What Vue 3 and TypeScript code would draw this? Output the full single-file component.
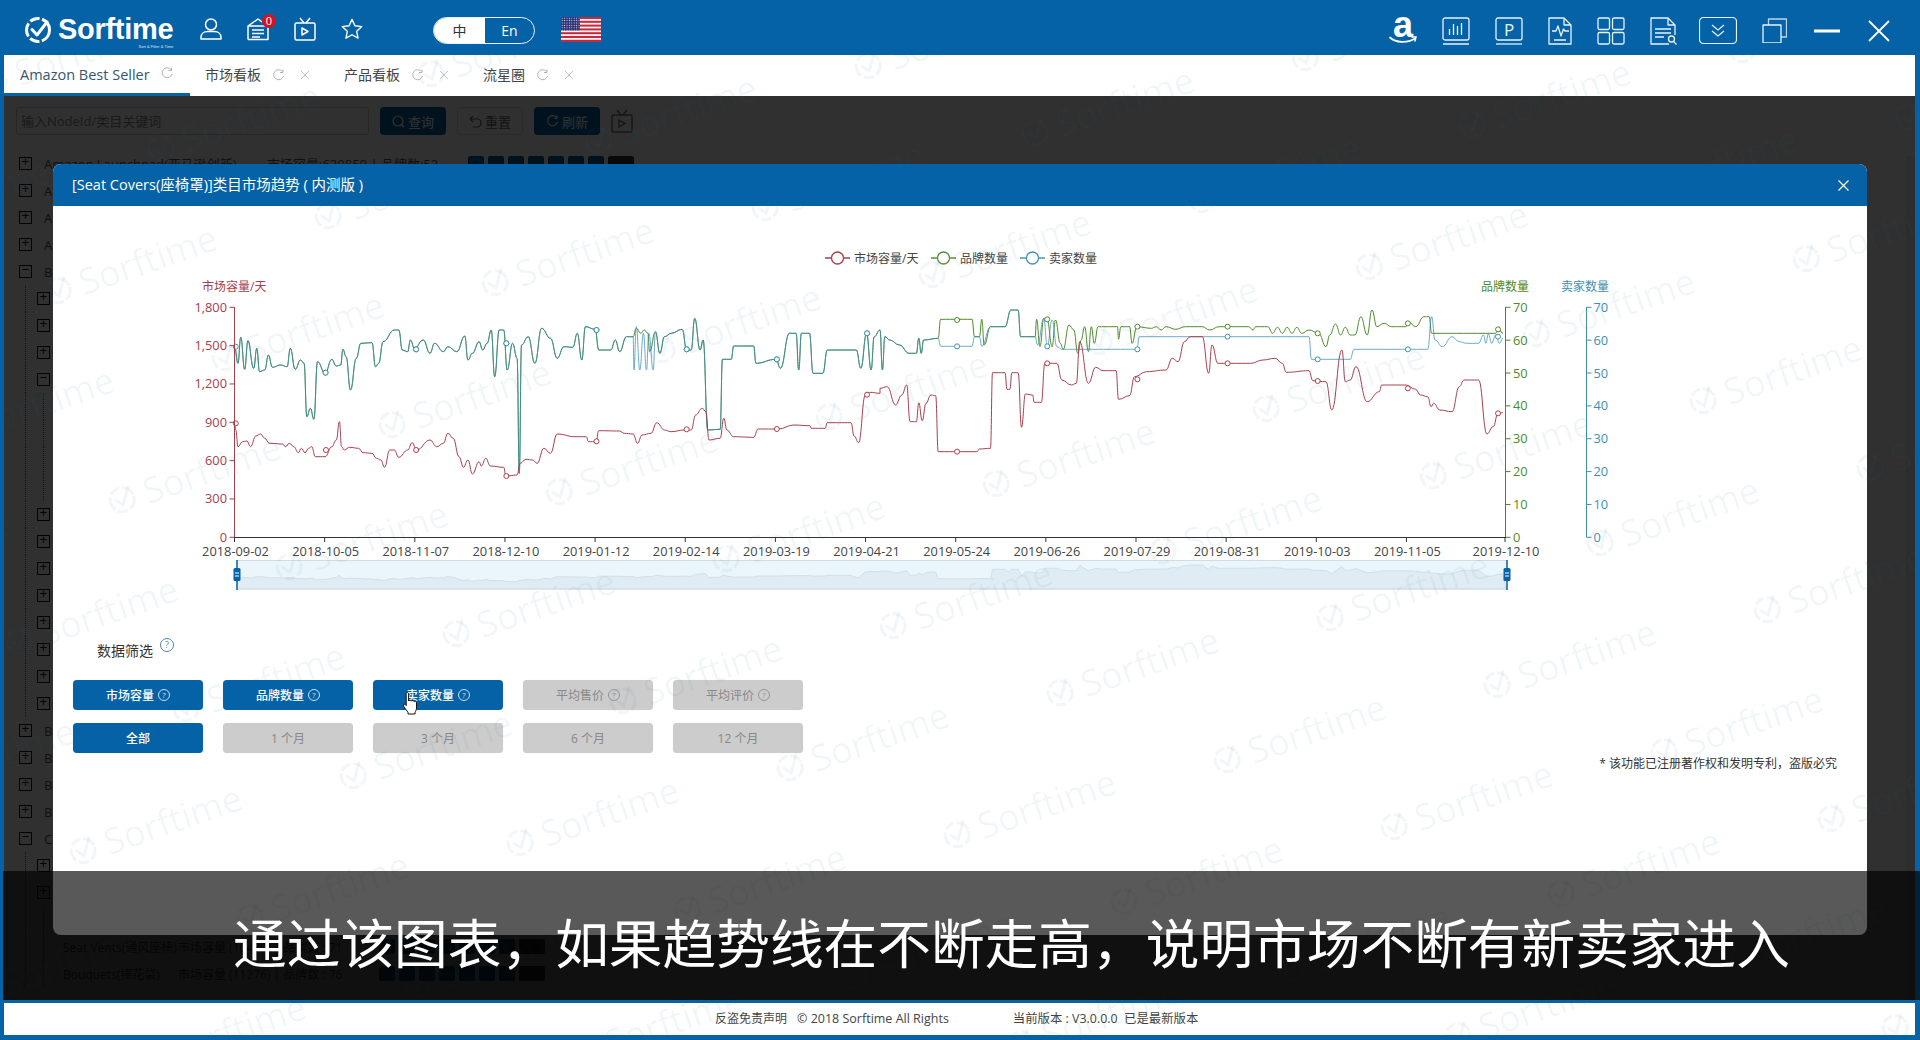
<script setup lang="ts">
type Pt = [number, number];
const pairs = (a: number[], ox: number, sx: number): Pt[] => {
  const out: Pt[] = [];
  for (let i = 0; i < a.length; i += 2) out.push([ox + a[i] / sx, 230 + a[i + 1] / 3]);
  return out;
};
const L = (a: number[]) => pairs(a, 180, 2.24);
const R = (a: number[]) => pairs(a, 880, 2.063);
const str = (p: Pt[]) => p.map((q) => q[0].toFixed(1) + ',' + q[1].toFixed(1)).join(' ');
const smooth = (p: Pt[]) => {
  let d = 'M' + p[0][0].toFixed(1) + ' ' + p[0][1].toFixed(1);
  for (let i = 1; i < p.length; i++) {
    const [x0, y0] = p[i - 1];
    const [x1, y1] = p[i];
    const h = (x1 - x0) * 0.45;
    d += 'C' + (x0 + h).toFixed(1) + ' ' + y0.toFixed(1) + ' ' + (x1 - h).toFixed(1) + ' ' + y1.toFixed(1) + ' ' + x1.toFixed(1) + ' ' + y1.toFixed(1);
  }
  return d;
};

const redPts = [
  ...L([122,580,125,600,130,650,140,635,150,633,158,650,170,618,180,612,190,625,200,640,230,642,236,650,245,640,255,650,265,668,272,655,280,668,288,655,295,650,303,680,325,680,340,650,350,630,357,575,362,650,368,660,380,652,400,655,410,668,430,670,440,685,450,690,458,712,470,660,480,660,490,682,510,660,520,638,530,660,560,630,575,650,590,640,600,610,612,625,625,680,635,712,645,690,655,732,670,695,675,708,685,685,695,708,725,712,730,738,755,735,762,700,775,688,790,690,800,700,815,655,830,670,845,612,885,620,910,620,915,635,932,635,938,602,985,603,995,610,1015,612,1025,640,1035,615,1055,610,1068,578,1085,600,1100,605,1130,600,1145,600,1155,555,1170,535,1178,545,1185,630,1210,625,1218,565,1225,600,1240,620,1285,622,1295,597,1340,597,1375,585,1410,587,1415,595,1445,595,1450,578,1503,578,1510,618,1520,638,1535,495,1545,487,1568,490]),
  ...R([0,475,15,470,32,525,45,495,55,465,62,575,75,575,80,518,87,572,95,520,105,495,115,497,120,665,200,665,205,657,228,655,232,428,258,428,262,478,268,478,272,428,285,428,292,592,300,492,315,495,318,517,333,517,340,400,365,400,375,450,395,465,405,460,412,335,430,460,445,412,460,422,487,422,492,508,515,497,525,440,550,425,590,420,603,385,615,395,628,335,640,320,665,320,678,430,685,345,697,400,765,400,790,390,815,385,830,400,838,427,885,422,893,452,920,455,932,540,953,360,960,455,970,450,982,410,1005,515,1030,485,1035,465,1085,465,1105,478,1115,495,1130,500,1137,530,1142,520,1155,540,1180,545,1195,470,1205,450,1235,450,1252,612,1265,590,1275,550,1285,548]),
];
const gtA = L([122,350,130,400,136,322,145,418,152,332,165,415,172,355,178,425,190,420,198,375,207,412,225,405,240,410,247,355,258,418,270,390,278,400,284,560,292,535,300,568,308,395,325,430,340,388,350,408,360,405,365,358,372,380,382,480,395,385,405,340,430,338,438,410,445,400,455,335,480,300,490,300,498,360,510,365,516,330,525,355,545,330,560,370,570,340,590,365,600,350,620,365,638,318,645,390,655,370,670,335,678,360,688,340,697,300,705,440,715,300,725,300,733,420,745,340,755,385,760,730,765,345,780,320,795,400,810,295,830,325,845,385,860,350,880,352,890,310,900,390,908,290,930,298,938,360,965,360,975,330,985,365,1000,320,1015,320]);
const gOsc = L([1022,295,1032,310,1040,300,1048,310,1052,365,1065,305]);
const tOsc = L([1017,420,1022,290,1030,420,1038,310,1045,420,1050,310,1060,420,1065,305]);
const gtB = [
  ...L([1075,370,1085,320,1100,310,1125,298,1135,360,1145,360,1153,265,1165,360,1172,330,1182,600,1210,598,1215,388,1235,388,1240,348,1285,348,1290,400,1335,388,1345,415,1365,310,1380,310,1386,420,1392,310,1410,310,1418,430,1440,430,1450,360,1515,360,1525,415,1538,310,1548,420,1555,320,1568,300]),
  ...R([0,300,5,420,10,320,20,330,40,345,60,370,75,370,80,325,85,370,90,330,120,325]),
];
const greenPts = [
  ...gtA, ...gOsc, ...gtB,
  ...R([125,268,190,268,195,320,205,320,210,268,215,345,228,290,258,290,270,240,285,240,290,320,320,320,323,268,330,350,338,265,345,270,355,350,362,270,372,340,378,358,390,285,400,300,408,370,415,330,422,290,430,365,436,290,442,340,450,290,457,290,490,290,492,328,497,290,515,290,520,340,530,290,560,295,570,290,580,300,590,290,610,298,630,290,665,290,680,300,700,290,760,290,770,300,775,290,800,290,810,310,820,292,830,310,840,292,850,310,860,292,870,310,885,300,905,310,920,350,928,315,940,282,950,315,960,292,970,315,980,315,992,260,1005,315,1015,240,1025,290,1040,280,1055,290,1085,290,1090,275,1105,290,1122,260,1133,260,1138,310,1270,310,1275,295,1285,310]),
];
const tealPts = [
  ...gtA, ...tOsc, ...gtB,
  ...R([125,349,190,349,195,320,205,320,210,349,228,290,258,290,270,240,285,240,290,320,320,320,325,345,338,265,345,350,355,270,365,350,375,358,530,358,535,320,885,320,890,388,970,388,978,358,1130,358,1138,260,1145,330,1160,350,1180,320,1195,335,1210,340,1235,340,1245,315,1250,340,1255,312,1262,340,1270,315,1278,340,1285,325]),
];

const series = [
  {
    key: 'g', color: '#4f8a2b', cls: 'line',
    d: smooth(greenPts),
    dots: [...L([326,428,529,358,731,340,933,300,1135,358,1337,388,1539,310]), ...R([159,270,345,268,531,290,717,290,903,310,1089,280,1275,298])],
  },
  {
    key: 't', color: '#3a8fb5', cls: 'line blend',
    d: smooth(tealPts),
    dots: [...L([125,350,326,428,529,358,731,340,933,300,1135,358,1337,388,1539,310]), ...R([159,349,345,349,531,358,717,320,903,388,1089,358,1275,320])],
  },
  {
    key: 'r', color: '#a8404c', cls: 'line',
    d: smooth(redPts),
    dots: [...L([125,580,327,660,529,660,731,738,933,634,1135,598,1337,597,1539,494]), ...R([159,665,345,400,531,448,717,400,903,453,1089,475,1275,550])],
  },
];

const miniLine = redPts.map((p): Pt => [p[0] < 237 ? 237 : p[0], 589 - (537 - p[1]) * 0.12]);
const miniArea = '237,589 ' + str(miniLine) + ' 1506,589';

const dates = ['2018-09-02','2018-10-05','2018-11-07','2018-12-10','2019-01-12','2019-02-14','2019-03-19','2019-04-21','2019-05-24','2019-06-26','2019-07-29','2019-08-31','2019-10-03','2019-11-05','2019-12-10'];
const xTicks = dates.map((d, i) => ({ d, x: i === 14 ? 1505 : 234.5 + i * 90.15 }));
const leftTicks = ['1,800','1,500','1,200','900','600','300','0'].map((t, i) => ({ t, y: 307.3 + i * 38.33 }));
const rightTicks = ['70','60','50','40','30','20','10','0'].map((t, i) => ({ t, y: 307.3 + i * 32.86 }));
const legend = [
  { n: '市场容量/天', c: '#a8404c', x: 825 },
  { n: '品牌数量', c: '#5d8f3a', x: 931 },
  { n: '卖家数量', c: '#4c93b3', x: 1020 },
];

const row1 = [
  { t: '市场容量', on: true }, { t: '品牌数量', on: true }, { t: '卖家数量', on: true },
  { t: '平均售价', on: false }, { t: '平均评价', on: false },
];
const row2 = [
  { t: '全部', on: true }, { t: '1 个月', on: false }, { t: '3 个月', on: false },
  { t: '6 个月', on: false }, { t: '12 个月', on: false },
];

interface TreeRow { lv: number; sym: string; name: string; stat: string }
const treeRows: TreeRow[] = [];
const add = (lv: number, sym: string, name = '', stat = '') => treeRows.push({ lv, sym, name, stat });
add(0, '+', 'Amazon Launchpad(亚马逊创新)', '市场容量:620850 | 品牌数:52');
add(0, '+', 'A');
add(0, '+', 'A');
add(0, '+', 'A');
add(0, '-', 'B');
for (let i = 0; i < 3; i++) add(1, '+');
add(1, '-');
for (let i = 0; i < 4; i++) add(2, '');
for (let i = 0; i < 8; i++) add(1, '+');
for (let i = 0; i < 4; i++) add(0, '+', 'B');
add(0, '-', 'C');
for (let i = 0; i < 2; i++) add(1, '+');
add(2, '');
add(2, '', 'Seat Vents(通风座椅)', '市场容量 (10430) | 品牌数 : 71');
add(2, '', 'Bouquets(捧花袋)', '市场容量 (11276) | 品牌数 : 76');
const chips = [1, 2, 3, 4, 5, 6, 7];

const tabs = [{ t: '市场看板' }, { t: '产品看板' }, { t: '流星圈' }];

const marks: { id: string; x: number; y: number }[] = [];
for (let i = -8; i < 14; i++) {
  for (let j = -8; j < 14; j++) {
    const x = 570 - 4 + i * 167 + j * 270;
    const y = 266 - 55 + i * 67 - j * 75;
    if (x > -120 && x < 2030 && y > -60 && y < 1040) marks.push({ id: i + '_' + j, x: x - 94, y: y - 30 });
  }
}
</script>

<template>
  <div class="app">
    <header class="top">
      <div class="logo">
        <svg class="logo-ic" width="28" height="26" viewBox="0 0 28 26" fill="none">
          <circle cx="14" cy="13" r="11.5" stroke="#fff" stroke-width="3" stroke-dasharray="14 2.5 10 2.5" />
          <path d="M8 12.5l5 5.5L23 5" stroke="#fff" stroke-width="3" stroke-linecap="round" stroke-linejoin="round" />
        </svg>
        <div class="logo-word">
          <span class="logo-name">Sorftime</span>
          <span class="logo-sub">Sort &amp; Filter &amp; Time</span>
        </div>
      </div>
      <div class="left-icons">
        <svg width="22" height="22" viewBox="0 0 22 22" class="ic">
          <circle cx="11" cy="6.5" r="5.5" />
          <path d="M1 21v-1.5C1 15.5 4 13.5 7.5 13.5h7c3.5 0 6.5 2 6.5 6V21z" />
        </svg>
        <div class="doc-wrap">
          <svg width="22" height="24" viewBox="0 0 22 24" class="ic">
            <path d="M1 22.5V9L11 2l4 3M1 22.5h20V9H1" />
            <path d="M5 13h12M5 16.5h12M5 20h8" />
          </svg>
          <span class="badge">0</span>
        </div>
        <svg width="22" height="24" viewBox="0 0 22 24" class="ic">
          <rect x="1" y="6" width="20" height="17" rx="1.5" />
          <path d="M6 1l4 5M16 1l-4 5M8 11v7l6-3.5z" />
        </svg>
        <svg width="22" height="22" viewBox="0 0 24 24" class="ic">
          <path d="M12 1.5l3.2 7 7.5.9-5.6 5.1 1.5 7.5L12 18.3 5.4 22l1.5-7.5L1.3 9.4l7.5-.9z" />
        </svg>
      </div>
      <div class="lang">
        <span class="lang-on">中</span>
        <span class="lang-off">En</span>
      </div>
      <svg class="flag" width="40" height="25" viewBox="0 0 40 25">
        <defs>
          <pattern id="st" width="2.4" height="2.4" patternUnits="userSpaceOnUse">
            <rect width="2.4" height="2.4" fill="#2b2f73" />
            <circle cx="1.2" cy="1.2" r=".6" fill="#dfe3f5" />
          </pattern>
        </defs>
        <rect width="40" height="25" fill="#f4f4f6" />
        <rect y="0" width="40" height="2" fill="#c8283c" />
        <rect y="3.8" width="40" height="2" fill="#c8283c" />
        <rect y="7.6" width="40" height="2" fill="#c8283c" />
        <rect y="11.4" width="40" height="2" fill="#c8283c" />
        <rect y="15.2" width="40" height="2" fill="#c8283c" />
        <rect y="19" width="40" height="2" fill="#c8283c" />
        <rect y="22.8" width="40" height="2.2" fill="#c8283c" />
        <rect width="19" height="13.4" fill="url(#st)" />
      </svg>
      <div class="right-icons">
        <svg width="28" height="28" viewBox="0 0 28 28" fill="none">
          <text x="14" y="20" text-anchor="middle" class="amz">a</text>
          <path d="M1 20.5c6 5.5 17 6 25 1" stroke="#fff" stroke-width="1.8" stroke-linecap="round" />
          <path d="M23 20h4l-1 4" stroke="#fff" stroke-width="1.5" stroke-linecap="round" />
        </svg>
        <svg width="28" height="28" viewBox="0 0 28 28" class="ic thin">
          <rect x="1" y="1" width="26" height="22" rx="2" />
          <path d="M1 27h26M7.5 18v-6M11.5 18V7M15.5 18V9M19.5 18V6" />
        </svg>
        <svg width="28" height="28" viewBox="0 0 28 28" class="ic thin">
          <rect x="1" y="1" width="26" height="22" rx="2" />
          <path d="M1 27h26" />
          <text x="14" y="18.5" text-anchor="middle" class="pchar">P</text>
        </svg>
        <svg width="24" height="28" viewBox="0 0 24 28" class="ic thin">
          <path d="M1 1h15l7 7v19H1zM16 1v7h7" />
          <path d="M4 14h4l2-5 3 10 2.5-7 1.5 2h4M6 23h12" />
        </svg>
        <svg width="28" height="28" viewBox="0 0 28 28" class="ic thin">
          <rect x="1" y="1" width="11.5" height="11.5" rx="1.5" />
          <rect x="15.5" y="1" width="11.5" height="11.5" rx="1.5" />
          <rect x="1" y="15.5" width="11.5" height="11.5" rx="1.5" />
          <rect x="15.5" y="15.5" width="11.5" height="11.5" rx="1.5" />
        </svg>
        <svg width="28" height="28" viewBox="0 0 28 28" class="ic thin">
          <path d="M19 27H1V1h17l7 7v10M18 1v7h7" />
          <path d="M5 12h16M5 16h16M5 20h9" />
          <circle cx="21.5" cy="22" r="3" />
          <path d="M23.5 24.5l3 3" />
        </svg>
        <svg class="m-box" width="38" height="27" viewBox="0 0 38 27">
          <rect class="st" x=".5" y=".5" width="37" height="26" rx="4" />
          <path class="st" d="M13 8l6 5 6-5M13 14l6 5 6-5" />
        </svg>
        <svg width="25" height="25" viewBox="0 0 25 25" class="ic thin">
          <path d="M6.5 7V1h18v18H19" stroke-opacity=".8" />
          <rect x="1" y="7" width="18" height="18" />
        </svg>
        <svg class="m-min" width="26" height="4" viewBox="0 0 26 4">
          <rect width="26" height="3" y=".5" fill="#fff" />
        </svg>
        <svg class="m-x" width="22" height="22" viewBox="0 0 22 22">
          <path class="st st2" d="M1 1l20 20M21 1L1 21" />
        </svg>
      </div>
    </header>

    <div class="main">
      <nav class="tabs">
        <div class="tab active">
          <span class="tab-t">Amazon Best Seller</span>
          <svg class="refresh" width="12" height="13" viewBox="0 0 12 13"><path d="M10 2.5A5 5 0 1 0 11 7M10.5 .5v3h-3" /></svg>
        </div>
        <div v-for="t in tabs" :key="t.t" class="tab">
          <span class="tab-t">{{ t.t }}</span>
          <svg class="refresh" width="13" height="13" viewBox="0 0 12 13"><path d="M10 2.5A5 5 0 1 0 11 7M10.5 .5v3h-3" /></svg>
          <svg class="tab-x" width="10" height="10" viewBox="0 0 10 10"><path d="M1 1l8 8M9 1L1 9" /></svg>
        </div>
      </nav>

      <div class="content">
        <div class="page">
          <div class="search">
            <div class="s-input">输入NodeId/类目关键词</div>
            <div class="s-btn blue">
              <svg width="13" height="13" viewBox="0 0 13 13"><circle cx="6" cy="6" r="5" /><path d="M9.5 9.5L12 12" /></svg>
              <span>查询</span>
            </div>
            <div class="s-btn plain">
              <svg width="13" height="13" viewBox="0 0 13 13"><path d="M1 4h7a4 4 0 0 1 0 8H4M4 1L1 4l3 3" /></svg>
              <span>重置</span>
            </div>
            <div class="s-btn blue">
              <svg width="13" height="13" viewBox="0 0 12 13"><path d="M10 2.5A5 5 0 1 0 11 7M10.5 .5v3h-3" /></svg>
              <span>刷新</span>
            </div>
            <svg width="22" height="24" viewBox="0 0 22 24" class="tv-dim">
              <rect x="1" y="6" width="20" height="17" rx="1.5" />
              <path d="M6 1l4 5M16 1l-4 5M8 11v7l6-3.5z" />
            </svg>
          </div>
          <div class="tree">
            <div v-for="(r, i) in treeRows" :key="i" class="t-row" :class="'lv' + r.lv">
              <span v-for="n in r.lv" :key="n" class="guide"></span>
              <span v-if="r.sym" class="t-sym">{{ r.sym === '+' ? '+' : '−' }}</span>
              <span v-if="r.name" class="t-name">{{ r.name }}</span>
              <template v-if="r.stat">
                <span class="t-stat">{{ r.stat }}</span>
                <span class="t-chips">
                  <i v-for="c in chips" :key="c" class="chip"></i>
                  <i class="chip wide"></i>
                </span>
              </template>
            </div>
          </div>
        </div>
        <div class="scrollbar"></div>
        <div class="backdrop"></div>

        <section class="modal">
          <div class="m-head">
            <span class="m-title">[Seat Covers(座椅罩)]类目市场趋势 ( 内测版 )</span>
            <svg width="11" height="11" viewBox="0 0 11 11"><path d="M.5.5l10 10M10.5.5l-10 10" /></svg>
          </div>
          <div class="m-body">
            <svg class="chart" width="1814" height="400" viewBox="53 206 1814 400">
              <g v-for="l in legend" :key="l.n">
                <line :x1="l.x" :x2="l.x + 25" y1="258" y2="258" :stroke="l.c" stroke-width="1.5" />
                <circle :cx="l.x + 12.5" cy="258" r="6" fill="#fff" :stroke="l.c" stroke-width="1.3" />
                <text :x="l.x + 29" y="262.5" class="leg">{{ l.n }}</text>
              </g>
              <text x="202" y="291" class="nm red">市场容量/天</text>
              <text x="1481" y="291" class="nm green">品牌数量</text>
              <text x="1561" y="291" class="nm teal">卖家数量</text>

              <path v-for="s in series" :key="s.key" :d="s.d" :stroke="s.color" :class="s.cls" />
              <template v-for="s in series" :key="s.key + 'd'">
                <circle v-for="(d, i) in s.dots" :key="i" :cx="d[0]" :cy="d[1]" r="2.5" fill="#fff" :stroke="s.color" stroke-width="1" />
              </template>

              <line x1="234.5" x2="234.5" y1="307" y2="537" class="ax-r" />
              <g v-for="t in leftTicks" :key="t.t">
                <line x1="229.5" x2="234.5" :y1="t.y" :y2="t.y" class="ax-r" />
                <text x="227" :y="t.y + 4.5" text-anchor="end" class="tk red">{{ t.t }}</text>
              </g>
              <line x1="1505.5" x2="1505.5" y1="307" y2="537" class="ax-g" />
              <line x1="1586.5" x2="1586.5" y1="307" y2="537" class="ax-t" />
              <g v-for="t in rightTicks" :key="t.t">
                <line x1="1505.5" x2="1510.5" :y1="t.y" :y2="t.y" class="ax-g" />
                <text x="1513" :y="t.y + 4.5" class="tk green">{{ t.t }}</text>
                <line x1="1586.5" x2="1591.5" :y1="t.y" :y2="t.y" class="ax-t" />
                <text x="1593.5" :y="t.y + 4.5" class="tk teal">{{ t.t }}</text>
              </g>
              <line x1="234" x2="1506" y1="537.5" y2="537.5" class="ax-x" />
              <g v-for="t in xTicks" :key="t.d">
                <line :x1="t.x" :x2="t.x" y1="537" y2="542" class="ax-x" />
                <text :x="t.x + 1" y="555.5" text-anchor="middle" class="tk dark">{{ t.d }}</text>
              </g>

              <rect x="237" y="560" width="1270" height="29" class="dz-bg" />
              <polygon :points="miniArea" class="dz-area" />
              <line x1="237" x2="1507" y1="560.5" y2="560.5" class="dz-edge" />
              <line x1="237" x2="1507" y1="589" y2="589" class="dz-edge" />
              <g v-for="h in [237, 1507]" :key="h">
                <line :x1="h" :x2="h" y1="560" y2="590" class="dz-h" />
                <rect :x="h - 3.5" y="568" width="7" height="13" rx="1.5" class="dz-hb" />
                <path :d="`M${h - 2} 573h4M${h - 2} 576h4`" class="dz-hl" />
              </g>
            </svg>

            <div class="filter">
              <div class="f-title">
                <span>数据筛选</span>
                <span class="help big">?</span>
              </div>
              <div class="f-grid">
                <div v-for="b in row1" :key="b.t" class="f-btn" :class="{ on: b.on }">
                  <span>{{ b.t }}</span><span class="help">?</span>
                </div>
                <div v-for="b in row2" :key="b.t" class="f-btn" :class="{ on: b.on }">
                  <span>{{ b.t }}</span>
                </div>
              </div>
              <svg class="hand" width="16" height="24" viewBox="0 0 16 24">
                <path d="M5 1.5c1 0 1.6.7 1.6 1.6V10c.2-1 2.6-1.2 2.9.2.2-1 2.4-1 2.6.4.4-.8 2.4-.6 2.4 1V17c0 2-1 3.3-1.4 4.2V23H6v-1.8C5 20 3 17.5 1.5 15c-.8-1.3.6-2.5 1.8-1.4l.9 1V3.100C4.200 2.200 4.200 1.500 5 1.500z" />
              </svg>
            </div>
            <p class="note">* 该功能已注册著作权和发明专利，盗版必究</p>
          </div>
        </section>
      </div>

      <footer class="foot">
        <span>反盗免责声明</span>
        <span class="f-copy">© 2018 Sorftime All Rights</span>
        <span class="f-ver">当前版本 : V3.0.0.0&nbsp;&nbsp;已是最新版本</span>
      </footer>

      <div class="marks">
        <div v-for="m in marks" :key="m.id" class="mark" :style="{ left: m.x + 'px', top: m.y + 'px' }">
          <svg width="30" height="34" viewBox="0 0 40 44" fill="none">
            <circle cx="20" cy="22" r="16" stroke-width="4" stroke-dasharray="18 4 14 4" />
            <path d="M12 20l7 9L33 8" stroke-width="4" stroke-linecap="round" />
          </svg>
          <span>Sorftime</span>
        </div>
      </div>
    </div>

    <div class="caption">通过该图表，如果趋势线在不断走高，说明市场不断有新卖家进入</div>
  </div>
</template>

<style>
html, body { margin: 0; padding: 0; background: #0662a6; overflow: hidden; }
</style>

<style scoped>
.app {
  position: relative;
  width: 1920px;
  height: 1040px;
  display: flex;
  flex-direction: column;
  background: #0662a6;
  overflow: hidden;
  font-family: "Open Sans", "Noto Sans CJK SC", sans-serif;
  color: #333;
}
.top {
  height: 55px;
  flex: none;
  display: flex;
  align-items: center;
  padding: 0 30px 0 24px;
  box-sizing: border-box;
}
.logo { display: flex; align-items: flex-start; width: 176px; height: 36px; margin-top: 6px; }
.logo-ic { margin-top: 4px; margin-right: 6px; }
.logo-word { display: flex; flex-direction: column; align-items: flex-end; }
.logo-name {
  font: 700 29px/30px "Liberation Sans", sans-serif;
  color: #fff;
  letter-spacing: -0.3px;
  margin-top: 1px;
  white-space: nowrap;
}
.logo-sub { font: 400 4px/5px "Liberation Sans", sans-serif; color: #dbe8f2; }
.ic { fill: none; stroke: #fff; stroke-width: 1.5; stroke-linejoin: round; }
.ic.thin { stroke-width: 1.3; stroke: #e6f3fb; }
.left-icons { display: flex; align-items: center; gap: 25px; margin: 2px 70px 0 0; }
.doc-wrap { position: relative; display: flex; }
.badge {
  position: absolute;
  left: 15px;
  top: -3px;
  width: 14px;
  height: 14px;
  border-radius: 50%;
  background: #d5121f;
  color: #fff;
  font: 400 11px/14px "Open Sans", sans-serif;
  text-align: center;
}
.lang {
  width: 102px;
  height: 27px;
  display: flex;
  border: 1px solid #e8f2f9;
  border-radius: 14px;
  overflow: hidden;
  box-sizing: border-box;
  font-size: 14px;
  line-height: 25px;
  text-align: center;
  margin: 6px 26px 0 0;
}
.lang-on { width: 51px; background: #fff; color: #333; }
.lang-off { flex: 1; color: #fff; }
.flag { margin-top: 4px; }
.right-icons { margin: 6px 0 0 auto; display: flex; align-items: center; gap: 25px; }
.amz { font: 700 36px "Liberation Sans", sans-serif; fill: #fff; stroke: none; }
.pchar { font: 400 17px "Open Sans", sans-serif; fill: #e6f3fb; stroke: none; }
.st { fill: none; stroke: #e6f3fb; stroke-width: 1.2; }
.st2 { stroke: #fff; stroke-width: 1.8; }
.m-box { margin-left: -4px; }
.m-min { margin-left: 2px; }
.m-x { margin-left: 3px; }

.main {
  position: relative;
  flex: 1;
  min-height: 0;
  margin: 0 5px 5px 4px;
  display: flex;
  flex-direction: column;
  overflow: hidden;
}
.tabs {
  height: 41px;
  flex: none;
  background: #fff;
  display: flex;
  box-sizing: border-box;
}
.tab {
  display: flex;
  align-items: center;
  padding: 0 19px 0 15px;
  font-size: 14px;
  color: #444;
  box-sizing: border-box;
  white-space: nowrap;
}
.tab-t { margin-top: -4px; }
.tab .refresh, .tab .tab-x { margin-top: -1px; }
.tab.active {
  width: 186px;
  padding-left: 16px;
  padding-right: 0;
  color: #34566f;
  border-bottom: 3px solid #0662a6;
  font-size: 14.5px;
}
.tab.active .tab-t { margin-top: 0; }
.refresh { margin-left: 11px; fill: none; stroke: #b3b3b3; stroke-width: 1; }
.tab-x { margin-left: 15px; fill: none; stroke: #c4c4c4; stroke-width: 1; }

.content { position: relative; flex: 1; min-height: 0; overflow: hidden; background: #fff; }
.page { padding: 11px 0 0 12px; }
.search { display: flex; align-items: center; height: 28px; }
.s-input {
  width: 353px;
  height: 28px;
  box-sizing: border-box;
  border: 1px solid #d0d0d0;
  border-radius: 3px;
  padding-left: 4px;
  font-size: 13px;
  line-height: 26px;
  color: #888;
  margin-right: 11px;
}
.s-btn {
  width: 66px;
  height: 28px;
  border-radius: 4px;
  font-size: 13px;
  display: flex;
  align-items: center;
  justify-content: center;
  gap: 3px;
  box-sizing: border-box;
  margin-right: 11px;
}
.s-btn svg { fill: none; stroke: currentColor; stroke-width: 1.2; }
.s-btn.blue { background: #0662a6; color: #fff; }
.s-btn.plain { border: 1px solid #ddd; color: #666; }
.tv-dim { fill: none; stroke: #777; stroke-width: 1.5; }
.tree { margin-top: 15px; margin-left: 3px; }
.t-row { height: 27px; display: flex; align-items: center; font-size: 13px; color: #555; white-space: nowrap; }
.lv2 { font-size: 12px; }
.guide { width: 12px; height: 27px; margin-left: 6px; border-left: 1px dotted #666; box-sizing: border-box; }
.t-sym {
  width: 13px;
  height: 13px;
  flex: none;
  border: 1px solid #111;
  box-sizing: border-box;
  font: 400 13px/10px "Liberation Mono", monospace;
  text-align: center;
  color: #111;
}
.t-name { margin-left: 12px; width: 223px; overflow: hidden; flex: none; }
.lv2 .t-name { margin-left: 8px; width: 115px; }
.t-stat { width: 201px; flex: none; overflow: hidden; }
.t-chips { display: flex; gap: 4px; }
.chip { width: 16px; height: 15px; border-radius: 2px; background: #0662a6; display: block; }
.chip.wide { width: 26px; background: #333; }
.scrollbar { position: absolute; right: 0; top: 60px; bottom: 0; width: 9px; background: #eee; }
.backdrop { position: absolute; inset: 0; background: rgba(0, 0, 0, 0.81); }

.modal {
  position: absolute;
  left: 49px;
  top: 68px;
  width: 1814px;
  height: 771px;
  background: #fff;
  border-radius: 8px;
  overflow: hidden;
  display: flex;
  flex-direction: column;
}
.m-head {
  height: 42px;
  flex: none;
  background: #0662a6;
  color: #fff;
  display: flex;
  align-items: center;
  justify-content: space-between;
  padding: 0 18px 0 19px;
  font-size: 14.5px;
}
.m-title { margin-top: -4px; }
.m-head svg { fill: none; stroke: #fff; stroke-width: 1.2; }
.m-body { flex: 1; }
.chart { display: block; }
.leg { font-size: 12px; fill: #444; }
.nm { font-size: 12px; }
.tk { font-size: 12.8px; }
.red { fill: #a8404c; }
.green { fill: #4f8a2b; }
.teal { fill: #3f8fae; }
.dark { fill: #444; }
.line { fill: none; stroke-width: 1; stroke-linejoin: round; }
.line.blend { stroke-opacity: 0.75; }
.ax-r { stroke: #a8404c; stroke-width: 1; }
.ax-g { stroke: #4f7f2f; stroke-width: 1; }
.ax-t { stroke: #3f8fae; stroke-width: 1; }
.ax-x { stroke: #333; stroke-width: 1; }
.dz-bg { fill: #ebf6fb; }
.dz-area { fill: #dfecf3; stroke: #d0e0e9; stroke-width: 1; }
.dz-edge { stroke: #d2dce2; stroke-width: 1; }
.dz-h { stroke: #0662a6; stroke-width: 1.5; }
.dz-hb { fill: #0662a6; }
.dz-hl { stroke: #fff; stroke-width: 1; fill: none; }

.filter { position: relative; padding-left: 20px; }
.f-title {
  margin: 35px 0 0 24px;
  height: 20px;
  display: flex;
  align-items: center;
  font-size: 14px;
  line-height: 20px;
  color: #333;
}
.help {
  display: inline-block;
  width: 12px;
  height: 12px;
  margin-left: 4px;
  border: 1px solid currentColor;
  border-radius: 50%;
  box-sizing: border-box;
  font: 400 8px/10px "Open Sans", sans-serif;
  text-align: center;
  opacity: .8;
}
.help.big {
  width: 14px;
  height: 14px;
  margin-left: 7px;
  margin-top: -12px;
  color: #4f88a8;
  font-size: 9px;
  line-height: 12px;
  opacity: 1;
}
.f-grid {
  margin-top: 19px;
  width: 730px;
  display: grid;
  grid-template-columns: repeat(5, 130px);
  grid-auto-rows: 30px;
  column-gap: 20px;
  row-gap: 13px;
}
.f-btn {
  display: flex;
  align-items: center;
  justify-content: center;
  border-radius: 4px;
  background: #ccc;
  color: #888;
  font-size: 12px;
  box-shadow: 0 0 1px rgba(0, 0, 0, .15);
}
.f-btn.on { background: #0662a6; color: #fff; font-weight: 500; }
.hand { position: absolute; left: 349px; top: 50px; fill: #fff; stroke: #111; stroke-width: 1; }
.note {
  margin: 2px 30px 0 0;
  height: 18px;
  font-size: 12px;
  line-height: 18px;
  color: #333;
  text-align: right;
}

.foot {
  height: 32px;
  margin-top: 3px;
  flex: none;
  background: #fff;
  display: flex;
  align-items: center;
  font-size: 12px;
  line-height: 14px;
  color: #444;
  padding: 0 0 0 711px;
  box-sizing: border-box;
}
.f-copy { margin-left: 10px; font-size: 12.5px; }
.f-ver { margin-left: 64px; font-size: 12.4px; }

.marks { position: absolute; inset: 0; pointer-events: none; overflow: hidden; }
.mark {
  position: absolute;
  display: flex;
  align-items: center;
  gap: 8px;
  transform: rotate(-19deg);
  color: rgba(30, 110, 150, 0.06);
  font: 400 36px/44px "Open Sans", sans-serif;
  white-space: nowrap;
}
.mark svg { stroke: rgba(30, 110, 150, 0.06); }

.caption {
  position: absolute;
  left: 3px;
  right: 0;
  top: 871px;
  height: 129px;
  background: rgba(0, 0, 0, 0.65);
  color: #fff;
  font: 400 53.7px/1 "Noto Sans CJK SC", sans-serif;
  padding: 43px 0 0 230px;
  box-sizing: border-box;
  white-space: nowrap;
}
</style>
